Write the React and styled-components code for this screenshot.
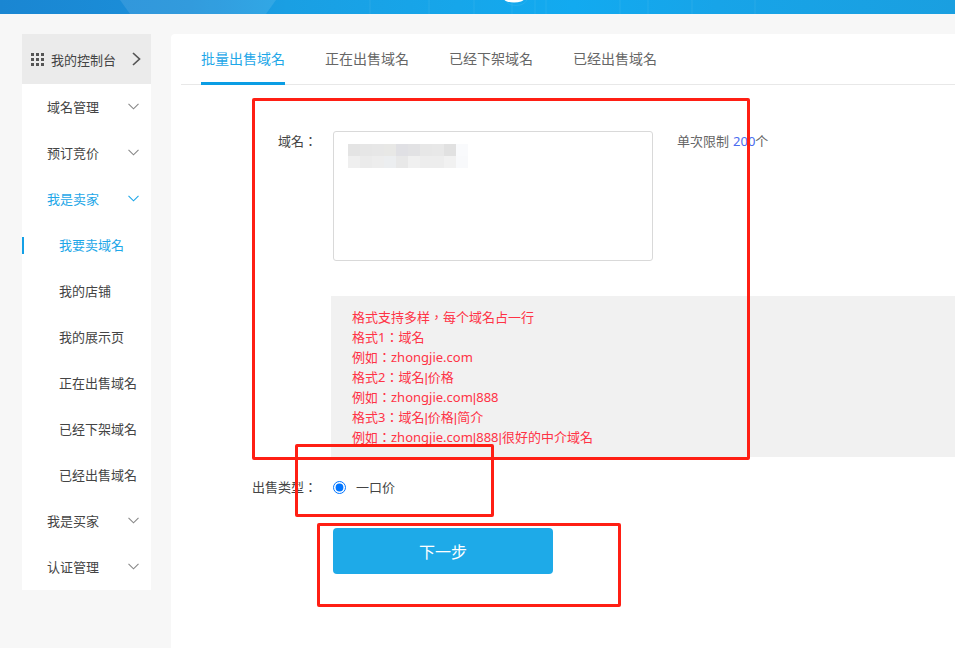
import React from 'react';
import styled, { createGlobalStyle } from 'styled-components';

const GlobalStyle = createGlobalStyle`
  html, body {
    margin: 0;
    padding: 0;
    height: 100%;
    overflow: hidden;
    background: #f7f7f7;
    font-family: "Noto Sans", "Noto Sans CJK TC", sans-serif;
    font-size: 13px;
    color: #444;
  }
  * {
    box-sizing: border-box;
  }
`;

const Page = styled.div`
  position: relative;
  width: 955px;
  height: 648px;
  overflow: hidden;
`;

const Banner = styled.header`
  position: relative;
  height: 14px;
  overflow: hidden;
  background: linear-gradient(90deg, #1a86d2 0%, #1b90da 20%, #1a9fe3 30%, #16a6ea 48%, #12aaf0 60%, #17a4e8 75%, #1a9fe0 100%);
`;

const BannerArt = styled.svg`
  display: block;
`;

const Body = styled.div`
  display: flex;
  align-items: flex-start;
  gap: 20px;
  padding: 20px 0 0 22px;
`;

const Sidebar = styled.nav`
  flex: none;
  width: 129px;
  background: #fff;
`;

const ConsoleRow = styled.div`
  display: flex;
  align-items: center;
  height: 50px;
  padding: 0 10px 0 9px;
  background: #ebebeb;
  color: #444;
  font-size: 13px;
`;

const ConsoleLabel = styled.span`
  flex: 1;
  margin-left: 7px;
`;

const MenuRow = styled.div`
  display: flex;
  align-items: center;
  justify-content: space-between;
  height: 46px;
  padding: ${(p) => (p.$sub ? '0 0 2px 37px' : '0 12px 2px 25px')};
  color: ${(p) => (p.$active ? '#1ea7e8' : '#444')};
  font-size: 13px;
  position: relative;
`;

const ActiveMark = styled.i`
  position: absolute;
  left: 0;
  top: 15px;
  width: 2px;
  height: 17px;
  background: #14a0e6;
`;

const Main = styled.main`
  flex: 1;
  min-width: 0;
  height: 640px;
  background: #fff;
  border-radius: 4px 0 0 0;
  padding-left: 10px;
`;

const Tabs = styled.div`
  display: flex;
  gap: 40px;
  height: 51px;
  padding-left: 20px;
  border-bottom: 1px solid #e8e8e8;
`;

const Tab = styled.div`
  height: 51px;
  line-height: 50px;
  font-size: 14px;
  color: ${(p) => (p.$active ? '#1ea7e8' : '#666')};
  border-bottom: ${(p) => (p.$active ? '3px solid #0b9de4' : 'none')};
`;

const Form = styled.div`
  padding-top: 46px;
`;

const Row = styled.div`
  display: flex;
  align-items: ${(p) => p.$align || 'flex-start'};
`;

const Label = styled.div`
  flex: none;
  width: 152px;
  padding-right: 16px;
  text-align: right;
  line-height: 20px;
  color: #444;
`;

const DomainBox = styled.div`
  flex: none;
  width: 320px;
  height: 130px;
  padding: 12px 14px;
  border: 1px solid #d9d9d9;
  border-radius: 3px;
  background: #fff;
`;

const Hint = styled.div`
  margin-left: 24px;
  line-height: 20px;
  color: #666;
`;

const HintNum = styled.span`
  margin-left: 4px;
  color: #4a6cf0;
`;

const Note = styled.div`
  margin: 35px 0 0 150px;
  height: 161px;
  padding: 11px 21px;
  background: #f1f1f1;
  color: #ff3346;
  font-size: 13px;
  line-height: 20px;
`;

const NoteLine = styled.div`
  height: 20px;
  white-space: nowrap;
`;

const Pipe = styled.span`
  font-family: "Liberation Sans", sans-serif;
  line-height: 0;
`;

const TypeRow = styled(Row)`
  margin-top: 20px;
  height: 20px;
`;

const Radio = styled.input`
  flex: none;
  width: 13px;
  height: 13px;
  margin: 0;
  accent-color: #0075ff;
`;

const RadioLabel = styled.span`
  margin: 0 0 1px 10px;
  color: #444;
`;

const NextButton = styled.button`
  display: block;
  width: 220px;
  height: 46px;
  margin: 31px 0 0 152px;
  border: 0;
  border-radius: 4px;
  background: #1eaae8;
  color: #fff;
  font-family: inherit;
  font-size: 16px;
`;

const Mark = styled.div`
  position: absolute;
  left: ${(p) => p.$x}px;
  top: ${(p) => p.$y}px;
  width: ${(p) => p.$w}px;
  height: ${(p) => p.$h}px;
  border: 3px solid #ff1f14;
  border-radius: 2px;
  pointer-events: none;
`;

const GridIcon = () => (
  <svg width="13" height="13" viewBox="0 0 13 13" fill="#555">
    {[0, 5, 10].map((y) =>
      [0, 5, 10].map((x) => <rect key={`${x}-${y}`} x={x} y={y} width="3" height="3" />)
    )}
  </svg>
);

const ArrowRight = () => (
  <svg width="9" height="14" viewBox="0 0 9 14" fill="none" stroke="#555" strokeWidth="1.7">
    <path d="M1 1l6.5 6L1 13" />
  </svg>
);

const ArrowDown = ({ color = '#888' }) => (
  <svg width="11" height="7" viewBox="0 0 11 7" fill="none" stroke={color} strokeWidth="1.1">
    <path d="M.5 .8l5 5 5-5" />
  </svg>
);

const bannerLines = [370, 429, 474, 546, 620, 648, 692, 755];

const BannerDrawing = () => (
  <BannerArt width="955" height="14" viewBox="0 0 955 14">
    <polygon points="120,0 276,0 266,14 130,14" fill="#fff" fillOpacity="0.1" />
    {bannerLines.map((x) => (
      <line key={x} x1={x} y1="0" x2={x} y2="14" stroke="#fff" strokeOpacity="0.07" />
    ))}
    <path d="M505 0a12 9 0 0 0 22 0M512 0v14M535 0v14" fill="none" stroke="#fff" strokeOpacity="0.07" />
    <ellipse cx="514" cy="-1" rx="10" ry="3.4" fill="#fff" />
  </BannerArt>
);

// the domain names in the box are pixelated in the screenshot
const mosaic = [
  ['#e4e4e4', '#e6e6e6', '#e7e7e7', '#e8e8e6', '#e0e0e4', '#e2e2e4', '#e7e7e7', '#e8e8e8', '#e1e1e1', '#f9fafc'],
  ['#efefef', '#ebebeb', '#ededed', '#eceef0', '#e8e8e8', '#f0f0f0', '#ededed', '#ededed', '#f1f1f1', '#f8f9fb'],
];

const Blurred = () => (
  <svg width="120" height="24" viewBox="0 0 120 24">
    {mosaic.map((row, y) =>
      row.map((fill, x) => (
        <rect key={`${x}-${y}`} x={x * 12} y={y * 12} width="12" height="12" fill={fill} />
      ))
    )}
  </svg>
);

const menuTop = ['域名管理', '预订竞价'];
const subMenu = ['我的店铺', '我的展示页', '正在出售域名', '已经下架域名', '已经出售域名'];
const menuBottom = ['我是买家', '认证管理'];
const tabs = ['批量出售域名', '正在出售域名', '已经下架域名', '已经出售域名'];
const noteLines = [
  ['格式支持多样，每个域名占一行'],
  ['格式1：域名'],
  ['例如：zhongjie.com'],
  ['格式2：域名', '价格'],
  ['例如：zhongjie.com', '888'],
  ['格式3：域名', '价格', '简介'],
  ['例如：zhongjie.com', '888', '很好的中介域名'],
];

const App = () => {
  return (
    <Page>
      <GlobalStyle />
      <Banner>
        <BannerDrawing />
      </Banner>
      <Body>
        <Sidebar>
          <ConsoleRow>
            <GridIcon />
            <ConsoleLabel>我的控制台</ConsoleLabel>
            <ArrowRight />
          </ConsoleRow>
          {menuTop.map((name) => (
            <MenuRow key={name}>
              {name}
              <ArrowDown />
            </MenuRow>
          ))}
          <MenuRow $active>
            我是卖家
            <ArrowDown color="#1ea7e8" />
          </MenuRow>
          <MenuRow $sub $active>
            <ActiveMark />
            我要卖域名
          </MenuRow>
          {subMenu.map((name) => (
            <MenuRow $sub key={name}>
              {name}
            </MenuRow>
          ))}
          {menuBottom.map((name) => (
            <MenuRow key={name}>
              {name}
              <ArrowDown />
            </MenuRow>
          ))}
        </Sidebar>
        <Main>
          <Tabs>
            {tabs.map((name, i) => (
              <Tab $active={i === 0} key={name}>
                {name}
              </Tab>
            ))}
          </Tabs>
          <Form>
            <Row>
              <Label>域名：</Label>
              <DomainBox>
                <Blurred />
              </DomainBox>
              <Hint>
                单次限制<HintNum>200</HintNum>个
              </Hint>
            </Row>
            <Note>
              {noteLines.map((parts) => (
                <NoteLine key={parts.join('|')}>
                  {parts.map((part, i) => (
                    <React.Fragment key={part}>
                      {i > 0 && <Pipe>|</Pipe>}
                      {part}
                    </React.Fragment>
                  ))}
                </NoteLine>
              ))}
            </Note>
            <TypeRow $align="center">
              <Label>出售类型：</Label>
              <Radio type="radio" defaultChecked name="sellType" />
              <RadioLabel>一口价</RadioLabel>
            </TypeRow>
            <NextButton>下一步</NextButton>
          </Form>
        </Main>
      </Body>
      <Mark $x={252} $y={98} $w={498} $h={362} />
      <Mark $x={295} $y={444} $w={199} $h={73} />
      <Mark $x={317} $y={523} $w={304} $h={84} />
    </Page>
  );
};

export default App;
